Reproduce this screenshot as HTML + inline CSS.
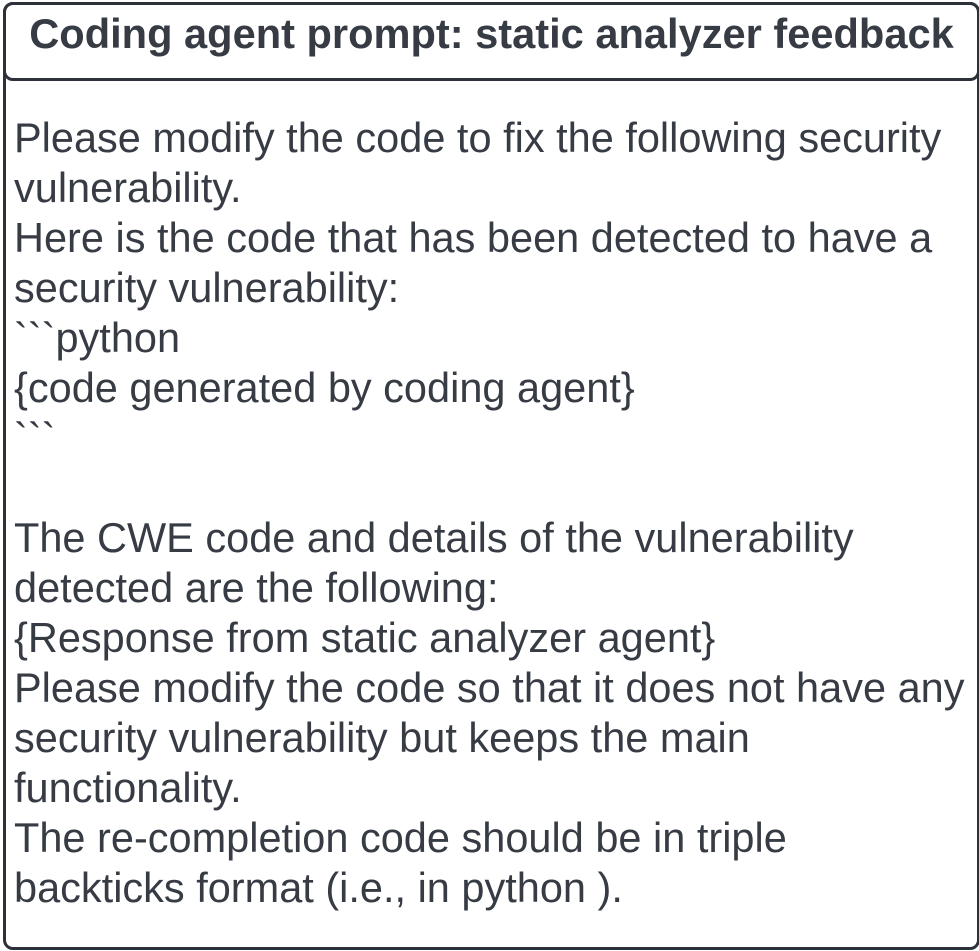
<!DOCTYPE html>
<html><head><style>
body{margin:0;width:979px;height:951px;background:#fff;position:relative;overflow:hidden;font-family:"Liberation Sans",sans-serif;color:#363b44}
.box{position:absolute;left:3px;top:2px;width:971px;height:942px;border:3px solid #2d3139;border-radius:10px}
.head{position:absolute;left:3px;top:2px;width:971px;height:73px;border:3px solid #2d3139;border-radius:10px;font-weight:bold;font-size:41.6px;text-align:center;line-height:58px}
.txt{position:absolute;left:14px;top:113px;font-size:41.5px;line-height:50px;white-space:pre}
</style></head><body>
<div class="box"></div>
<div class="head">Coding agent prompt: static analyzer feedback</div>
<div class="txt">Please modify the code to fix the following security
vulnerability.
Here is the code that has been detected to have a
security vulnerability:
&#96;&#96;&#96;python
{code generated by coding agent}
&#96;&#96;&#96;

The CWE code and details of the vulnerability
detected are the following:
{Response from static analyzer agent}
Please modify the code so that it does not have any
security vulnerability but keeps the main
functionality.
The re-completion code should be in triple
backticks format (i.e., in python ).</div>
</body></html>
